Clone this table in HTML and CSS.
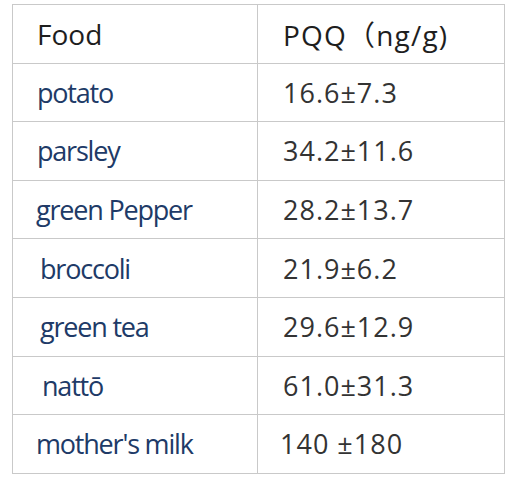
FILE: index.html
```html
<!DOCTYPE html>
<html>
<head>
<meta charset="utf-8">
<link rel="stylesheet" href="styles.css">
</head>
<body>
<table class="pqq">
  <tr class="head"><td class="food">Food</td><td class="val">PQQ（ng/g)</td></tr>
  <tr><td class="food name">potato</td><td class="val num">16.6±7.3</td></tr>
  <tr><td class="food name">parsley</td><td class="val num">34.2±11.6</td></tr>
  <tr><td class="food name shift-l">green Pepper</td><td class="val num">28.2±13.7</td></tr>
  <tr><td class="food name shift-r">broccoli</td><td class="val num">21.9±6.2</td></tr>
  <tr><td class="food name shift-r">green tea</td><td class="val num">29.6±12.9</td></tr>
  <tr><td class="food name shift-rr">nattō</td><td class="val num">61.0±31.3</td></tr>
  <tr><td class="food name shift-l">mother's milk</td><td class="val num num-wide">140 ±180</td></tr>
</table>
</body>
</html>
```
FILE: styles.css
```css
html, body {
  margin: 0;
  padding: 0;
  background: #ffffff;
}
body {
  padding: 4px 0 0 12px;
}
.pqq {
  border-collapse: collapse;
  width: 493px;
  table-layout: fixed;
  font-family: "Open Sans", "Noto Sans CJK SC", sans-serif;
}
.pqq td {
  box-sizing: border-box;
  border: 1px solid #c9c9c9;
  height: 58.6px;
  padding: 0;
  vertical-align: middle;
  white-space: nowrap;
}
.pqq td.food {
  width: 245px;
  padding-left: 24px;
}
.pqq td.val {
  padding-left: 25px;
}
.head td {
  font-size: 28px;
  color: #1e1e1e;
}
.head td.val {
  letter-spacing: 1.2px;
}
.name {
  font-size: 27px;
  color: #203a67;
  letter-spacing: -1.2px;
}
.pqq td.shift-l { padding-left: 23px; }
.pqq td.shift-r { padding-left: 27px; }
.pqq td.shift-rr { padding-left: 29px; }
.num {
  font-size: 27px;
  color: #333333;
  letter-spacing: 1px;
}
.pqq td.num-wide {
  padding-left: 22px;
}
```
